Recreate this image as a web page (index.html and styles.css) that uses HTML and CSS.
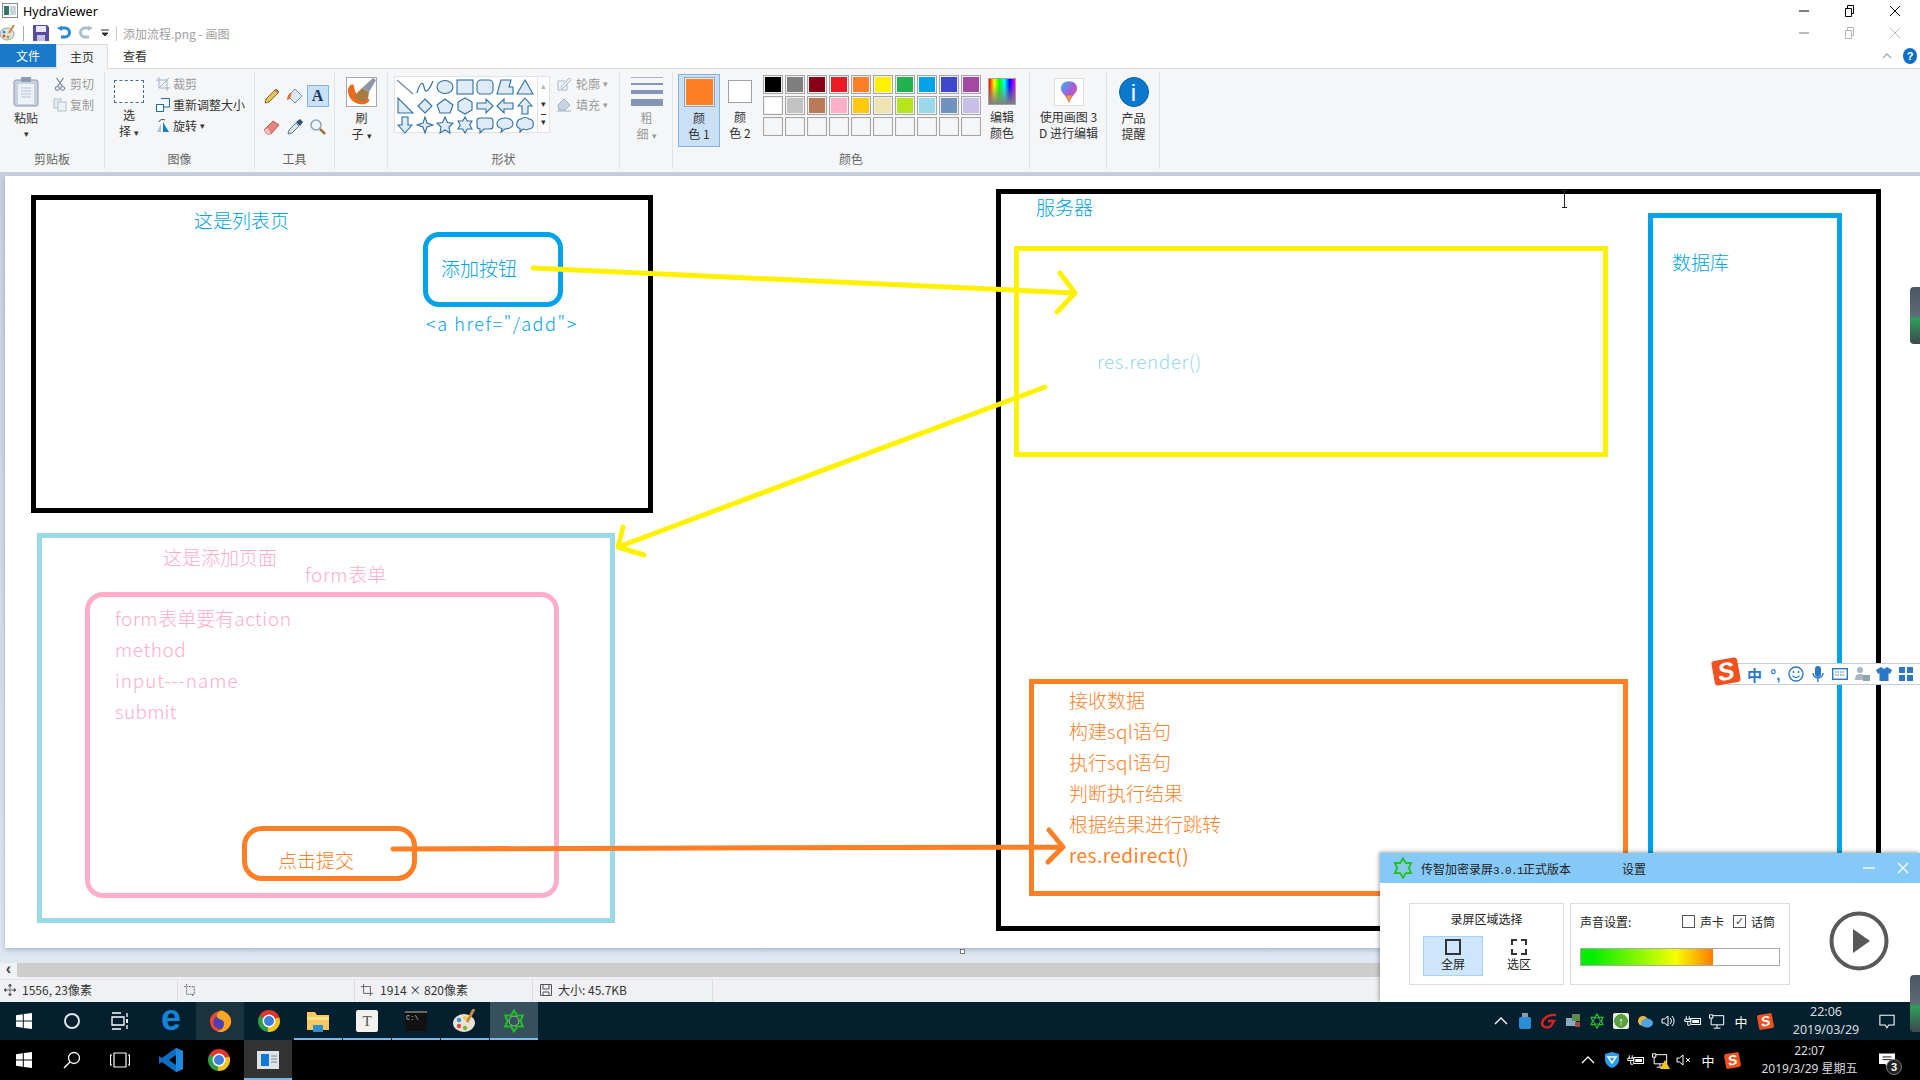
FILE: index.html
```html
<!DOCTYPE html>
<html lang="zh-CN">
<head>
<meta charset="utf-8">
<title>HydraViewer</title>
<link rel="stylesheet" href="styles.css">
</head>
<body>
<svg class="defs" aria-hidden="true">
  <defs>
    <symbol id="win" viewBox="0 0 16 16"><path d="M0 2.3 6.8 1.3V7.6H0ZM7.8 1.1 16 0V7.6H7.8ZM0 8.6H6.8V14.8L0 13.8ZM7.8 8.6H16V16L7.8 14.9Z" fill="#fff"/></symbol>
    <symbol id="star" viewBox="0 0 24 24"><path d="M12 1.5 15 6.500 20.800 6.500 18.500 12 20.800 17.500 15 17.500 12 22.500 9 17.500 3.200 17.500 5.500 12 3.200 6.500 9 6.500Z" fill="none" stroke="#1fc01f" stroke-width="2"/><circle cx="12" cy="12" r="5" fill="none" stroke="#7fd87f" stroke-width="1"/></symbol>
    <symbol id="batt" viewBox="0 0 24 16"><path d="M3 1V5M7 1V5M1 5H9V8H1ZM5 8V13H8" fill="none" stroke="#fff" stroke-width="1.300"/><rect x="9" y="4" width="13" height="8" fill="none" stroke="#fff" stroke-width="1.300"/><rect x="11" y="6" width="9" height="4" fill="#fff"/></symbol>
    <symbol id="net" viewBox="0 0 20 18"><path d="M1 1H5V5H1ZM5 2H18V13H3V5M10 13V17M6 17H14" fill="none" stroke="#fff" stroke-width="1.200"/></symbol>
  </defs>
</svg>

<header class="titlebar">
  <svg class="app-icon" viewBox="0 0 16 16"><rect x=".5" y=".5" width="15" height="14" fill="#fff" stroke="#8a8a8a"/><rect x="2" y="3" width="5" height="9" fill="#2d7a6a"/><rect x="8" y="3" width="6" height="9" fill="#c9d3dc"/></svg>
  <span class="app-name">HydraViewer</span>
  <div class="win-ctl">
    <svg viewBox="0 0 12 12"><path d="M1 6H11" stroke="#000"/></svg>
    <svg viewBox="0 0 12 12"><path d="M2.500 3.500H8.500V11.500H2.500ZM4.500 3.500V.5H10.500V8.500H8.500" fill="none" stroke="#000"/></svg>
    <svg viewBox="0 0 12 12"><path d="M1 1 11 11M11 1 1 11" stroke="#000"/></svg>
  </div>
</header>

<div class="quickbar">
  <svg class="qa-paint" viewBox="0 0 16 16"><ellipse cx="7" cy="9" rx="7" ry="6" fill="#e8e2d6" stroke="#8ba4b8"/><circle cx="4" cy="7" r="1.500" fill="#3a8fd8"/><circle cx="4" cy="11" r="1.500" fill="#e04a3a"/><circle cx="8" cy="12" r="1.500" fill="#7fb83a"/><path d="M14 0 9 8" stroke="#d08a2a" stroke-width="2"/></svg>
  <i class="q-sep"></i>
  <svg class="qa-save" viewBox="0 0 16 16"><path d="M0 0H14L16 2V16H0Z" fill="#5b4b9c"/><rect x="3" y="1" width="10" height="6" fill="#e9e6f5"/><rect x="4" y="10" width="8" height="6" fill="#c8c2e4"/></svg>
  <svg class="qa-undo" viewBox="0 0 14 14"><path d="M3 2H8A4.500 4.500 0 0 1 8 11H4" fill="none" stroke="#2a86d8" stroke-width="3"/><path d="M5 0V5L0 2Z" fill="#2a86d8"/></svg>
  <svg class="qa-redo" viewBox="0 0 14 14"><path d="M11 2H6A4.500 4.500 0 0 0 6 11H10" fill="none" stroke="#a9bfd2" stroke-width="3"/><path d="M9 0V5L14 2Z" fill="#a9bfd2"/></svg>
  <svg class="qa-more" viewBox="0 0 8 8"><path d="M0 1H8M1 4H7L4 7Z" stroke="#333" fill="#333"/></svg>
  <i class="q-sep q-sep2"></i>
  <span class="doc-title">添加流程.png - 画图</span>
  <div class="win-ctl win-ctl-dim">
    <svg viewBox="0 0 12 12"><path d="M1 6H11" stroke="#bbb" stroke-width="2"/></svg>
    <svg viewBox="0 0 12 12"><path d="M2.500 3.500H8.500V11.500H2.500ZM4.500 3.500V.5H10.500V8.500H8.500" fill="none" stroke="#b5b5b5"/></svg>
    <svg viewBox="0 0 12 12"><path d="M1 1 11 11M11 1 1 11" stroke="#bbb"/></svg>
  </div>
</div>

<nav class="tabs">
  <span class="tab tab-file">文件</span>
  <span class="tab tab-home">主页</span>
  <span class="tab tab-view">查看</span>
  <div class="tab-right">
    <svg class="collapse" viewBox="0 0 10 6"><path d="M1 5 5 1 9 5" fill="none" stroke="#aaa" stroke-width="1.300"/></svg>
    <span class="help">?</span>
  </div>
</nav>

<section class="ribbon">
  <div class="group g-clip">
    <div class="group-body">
      <div class="big big-paste">
        <svg class="ic-paste" viewBox="0 0 26 30"><rect x="1" y="3" width="24" height="26" rx="2" fill="#c7d0de" stroke="#8f9bb0"/><rect x="5" y="7" width="16" height="20" fill="#eef2f7"/><path d="M8 11H18M8 14H18M8 17H18M8 20H18" stroke="#b6c3d4"/><rect x="8" y="0" width="10" height="5" rx="1" fill="#8f9bb0"/></svg>
        <span>粘贴</span><span class="caret">▾</span>
      </div>
      <div class="small-col sc-clip">
        <div class="small"><svg viewBox="0 0 12 16"><path d="M2 1 9 11M10 1 3 11" stroke="#7a8aa0" stroke-width="1.300"/><circle cx="3" cy="13" r="2.200" fill="none" stroke="#7a8aa0" stroke-width="1.300"/><circle cx="9" cy="13" r="2.200" fill="none" stroke="#7a8aa0" stroke-width="1.300"/></svg><span class="dim">剪切</span></div>
        <div class="small"><svg viewBox="0 0 14 14"><rect x="1" y="1" width="7" height="9" fill="#e4eaf1" stroke="#b5c0ce"/><rect x="5" y="4" width="8" height="9" fill="#eef2f7" stroke="#b5c0ce"/></svg><span class="dim">复制</span></div>
      </div>
    </div>
    <div class="group-label">剪贴板</div>
  </div>

  <div class="group g-image">
    <div class="group-body">
      <div class="big big-select">
        <i class="ic-select"></i>
        <span>选</span><span>择<em class="caret-in">▾</em></span>
      </div>
      <div class="small-col sc-image">
        <div class="small"><svg viewBox="0 0 14 14"><path d="M3 0V11H14M0 3H11V14M3 11 13 1" fill="none" stroke="#9fb4c8"/></svg><span class="dim">裁剪</span></div>
        <div class="small"><svg viewBox="0 0 14 14"><rect x=".5" y="6.500" width="7" height="7" fill="#fff" stroke="#1a6fb5"/><path d="M5 .5H13.500V9H8" fill="none" stroke="#1a6fb5"/></svg><span>重新调整大小</span></div>
        <div class="small"><svg viewBox="0 0 14 14"><path d="M7 3 13 13H7Z" fill="#1f7ec9"/><path d="M1 13 5 5V13Z" fill="#9dc4e4"/><path d="M3 3A4 4 0 0 1 9 1" fill="none" stroke="#444"/></svg><span>旋转</span><em class="caret-in">▾</em></div>
      </div>
    </div>
    <div class="group-label">图像</div>
  </div>

  <div class="group g-tools">
    <div class="group-body">
      <div class="tool-grid">
        <svg viewBox="0 0 18 18"><path d="M2 16 3 12 13 2 16 5 6 15Z" fill="#e6c35c" stroke="#8a6a24"/><path d="M13 2 16 5 14.500 6.500 11.500 3.500Z" fill="#d96a5a"/></svg>
        <svg viewBox="0 0 18 18"><path d="M9 2 16 9 9 16 2 9Z" fill="#d8e8f4" stroke="#6c93b3"/><path d="M1 13C1 9 3 6 6 5L4 12Z" fill="#e2703a"/></svg>
        <span class="tool-a">A</span>
        <svg viewBox="0 0 18 18"><path d="M1 12 10 3 16 7 8 16H4Z" fill="#e8827f" stroke="#b85a58"/><path d="M1 12 4 16H8L5 10Z" fill="#f4c3c1"/></svg>
        <svg viewBox="0 0 18 18"><path d="M2 16 3 12 10 5 13 8 6 15Z" fill="#dbe6f0" stroke="#5d7a94"/><path d="M10 4 14 1 17 4 14 8Z" fill="#33506c"/></svg>
        <svg viewBox="0 0 18 18"><circle cx="7" cy="7" r="5" fill="#eef4fa" stroke="#8fa4b8" stroke-width="1.500"/><path d="M11 11 16 16" stroke="#a0753a" stroke-width="2.500"/></svg>
      </div>
    </div>
    <div class="group-label">工具</div>
  </div>

  <div class="group g-brush">
    <div class="group-body">
      <div class="big">
        <svg class="ic-brush" viewBox="0 0 31 30"><rect x=".5" y=".5" width="30" height="29" fill="#fff" stroke="#a3aab5"/><path d="M2 12C1 22 10 29 19 27 22 26 24 24 23 22 17 24 9 20 8 9 7 6 3 8 2 12Z" fill="#ee6a1c"/><path d="M9 18 16 11 23 15 22 22C18 26 10 25 9 18Z" fill="#a87a42"/><path d="M16 11 27 1 30 3 23 15Z" fill="#8c98a6"/></svg>
        <span>刷</span><span>子<em class="caret-in">▾</em></span>
      </div>
    </div>
    <div class="group-label">刷子</div>
  </div>

  <div class="group g-shapes">
    <div class="group-body">
      <div class="gallery">
        <div class="shape-grid">
          <svg viewBox="0 0 18 18"><path class="ln" d="M1 2 17 16"/></svg>
          <svg viewBox="0 0 18 18"><path class="sh-o" d="M1 15C4 4 7 3 8 9S12 15 17 3"/></svg>
          <svg viewBox="0 0 18 18"><ellipse class="sh" cx="9" cy="9" rx="8" ry="6.500"/></svg>
          <svg viewBox="0 0 18 18"><rect class="sh" x="1" y="2" width="16" height="14"/></svg>
          <svg viewBox="0 0 18 18"><rect class="sh" x="1" y="2" width="16" height="14" rx="4"/></svg>
          <svg viewBox="0 0 18 18"><path class="sh" d="M1 16 5 2H15L13 9H17V16Z"/></svg>
          <svg viewBox="0 0 18 18"><path class="sh" d="M9 2 17 16H1Z"/></svg>
          <svg viewBox="0 0 18 18"><path class="sh" d="M2 1V16H17Z"/></svg>
          <svg viewBox="0 0 18 18"><path class="sh" d="M9 2 16 9 9 16 2 9Z"/></svg>
          <svg viewBox="0 0 18 18"><path class="sh" d="M9 2 17 8 14 16H4L1 8Z"/></svg>
          <svg viewBox="0 0 18 18"><path class="sh" d="M9 1 16 5V13L9 17 2 13V5Z"/></svg>
          <svg viewBox="0 0 18 18"><path class="sh" d="M1 6H10V2L17 9 10 16V12H1Z"/></svg>
          <svg viewBox="0 0 18 18"><path class="sh" d="M17 6H8V2L1 9 8 16V12H17Z"/></svg>
          <svg viewBox="0 0 18 18"><path class="sh" d="M6 17V9H2L9 1 16 9H12V17Z"/></svg>
          <svg viewBox="0 0 18 18"><path class="sh" d="M6 1V9H2L9 17 16 9H12V1Z"/></svg>
          <svg viewBox="0 0 18 18"><path class="sh" d="M9 1 11 7 17 9 11 11 9 17 7 11 1 9 7 7Z"/></svg>
          <svg viewBox="0 0 18 18"><path class="sh" d="M9 1 11.500 6.500 17 7.200 13 11 14 17 9 14 4 17 5 11 1 7.200 6.500 6.500Z"/></svg>
          <svg viewBox="0 0 18 18"><path class="sh" d="M9 1 11.300 5 16 5 13.700 9 16 13 11.300 13 9 17 6.700 13 2 13 4.300 9 2 5 6.700 5Z"/></svg>
          <svg viewBox="0 0 18 18"><path class="sh" d="M4 2H14Q17 2 17 5V10Q17 13 14 13H8L4 17V13Q1 13 1 10V5Q1 2 4 2Z"/></svg>
          <svg viewBox="0 0 18 18"><path class="sh" d="M9 2C14 2 17 4.500 17 7.500S14 13 9 13L5 16 6 12.500C3 12 1 10 1 7.500 1 4.500 4 2 9 2Z"/></svg>
          <svg viewBox="0 0 18 18"><path class="sh" d="M5 3C7 1 11 1 13 3 16 3 18 6 17 8 18 11 15 13 13 13 11 14 9 14 7 13L4 16V12.500C1 12 0 9 1 7 1 5 3 3 5 3Z"/></svg>
        </div>
        <div class="scroller"><span class="up">▴</span><span>▾</span><span class="last">▾</span></div>
      </div>
      <div class="small-col sc-shapes">
        <div class="small"><svg viewBox="0 0 14 14"><path d="M1 4H8M1 4V13H10V6M4 10 12 1 14 3 5 12Z" fill="#eef2f7" stroke="#aab7c6"/></svg><span class="dim">轮廓</span><em class="caret-in dim">▾</em></div>
        <div class="small"><svg viewBox="0 0 14 14"><path d="M7 1 13 7 8 12H2L1 7Z" fill="#c8d5e3" stroke="#9fb0c2"/><path d="M0 13H14" stroke="#9fb0c2"/></svg><span class="dim">填充</span><em class="caret-in dim">▾</em></div>
      </div>
    </div>
    <div class="group-label">形状</div>
  </div>

  <div class="group g-size">
    <div class="group-body">
      <div class="big dim">
        <div class="ic-size"><i class="w1"></i><i class="w2"></i><i class="w3"></i><i class="w4"></i></div>
        <span>粗</span><span>细<em class="caret-in">▾</em></span>
      </div>
    </div>
  </div>

  <div class="group g-colors">
    <div class="group-body">
      <div class="big big-color1">
        <i class="swatch-main"></i>
        <span>颜</span><span>色 1</span>
      </div>
      <div class="big big-color2">
        <i class="swatch-second"></i>
        <span>颜</span><span>色 2</span>
      </div>
      <div class="palette">
        <i class="c-black"></i><i class="c-gray"></i><i class="c-maroon"></i><i class="c-red"></i><i class="c-orange"></i><i class="c-yellow"></i><i class="c-green"></i><i class="c-blue"></i><i class="c-indigo"></i><i class="c-purple"></i>
        <i class="c-white"></i><i class="c-silver"></i><i class="c-brown"></i><i class="c-pink"></i><i class="c-gold"></i><i class="c-cream"></i><i class="c-lime"></i><i class="c-sky"></i><i class="c-steel"></i><i class="c-lav"></i>
        <i></i><i></i><i></i><i></i><i></i><i></i><i></i><i></i><i></i><i></i>
      </div>
      <div class="big big-edit">
        <i class="ic-rainbow"></i>
        <span>编辑</span><span>颜色</span>
      </div>
    </div>
    <div class="group-label">颜色</div>
  </div>

  <div class="group g-3d">
    <div class="group-body">
      <div class="big">
        <div class="ic-3d"><svg viewBox="0 0 20 26"><defs><linearGradient id="drop" x1="0" y1="0" x2="1" y2="1"><stop offset="0" stop-color="#35b6ee"/><stop offset=".5" stop-color="#a45fd8"/><stop offset="1" stop-color="#f0527a"/></linearGradient></defs><path d="M10 1C16 1 19 5 19 9 19 14 14 15 10 25 6 15 1 14 1 9 1 5 4 1 10 1Z" fill="url(#drop)"/><path d="M10 25 7 17 13 17Z" fill="#f59a3a"/></svg></div>
        <span>使用画图 3</span><span>D 进行编辑</span>
      </div>
    </div>
  </div>

  <div class="group g-alert">
    <div class="group-body">
      <div class="big">
        <div class="ic-info">i</div>
        <span>产品</span><span>提醒</span>
      </div>
    </div>
  </div>
</section>

<main class="workspace">
  <div class="canvas">
    <div class="box b-list"></div>
    <div class="box b-add-btn"></div>
    <div class="box b-add"></div>
    <div class="box b-form"></div>
    <div class="box b-submit"></div>
    <div class="box b-server"></div>
    <div class="box b-yellow"></div>
    <div class="box b-db"></div>
    <div class="box b-orange"></div>

    <span class="t t-blue t-list">这是列表页</span>
    <span class="t t-blue t-addbtn">添加按钮</span>
    <span class="t t-blue t-href">&lt;a href="/add"&gt;</span>
    <span class="t t-pink t-addpage">这是添加页面</span>
    <span class="t t-pink t-form"><span class="lat-form">form</span>表单</span>
    <div class="t-lines t-pink l-form">
      <div><span class="lat-form">form</span>表单要有<span class="lat-form">action</span></div><div class="lat-form">method</div><div class="wide">input---name</div><div class="lat-s">submit</div>
    </div>
    <span class="t t-orange t-submit">点击提交</span>
    <span class="t t-blue t-server">服务器</span>
    <span class="t t-blue t-db">数据库</span>
    <span class="t t-sky t-render">res.render()</span>
    <div class="t-lines t-orange l-server">
      <div>接收数据</div><div>构建<span class="lat-s">sql</span>语句</div><div>执行<span class="lat-s">sql</span>语句</div><div>判断执行结果</div><div>根据结果进行跳转</div><div class="lat-r">res.redirect()</div>
    </div>

    <svg class="arrows" viewBox="0 0 1915 772">
      <g fill="none" stroke-linecap="round" stroke-linejoin="round" stroke-width="5">
        <path stroke="#fff200" d="M528 92 1070 117M1055 97 1070 117 1052 136"/>
        <path stroke="#fff200" d="M1040 211 613 371M618 351 613 371 639 379"/>
        <path stroke="#ff7f27" d="M388 673 700 672 1058 671M1044 654 1058 671 1043 686"/>
      </g>
    </svg>
    <i class="handle"></i>
    <svg class="ibeam" viewBox="0 0 7 18"><path d="M1 .5H6M3.500 .5V17.500M1 17.500H6" stroke="#222"/></svg>
  </div>
</main>

<div class="hscroll"><span class="hs-btn">‹</span><div class="hs-track"></div></div>

<footer class="statusbar">
  <div class="st st1"><svg viewBox="0 0 12 12"><path d="M6 0V12M0 6H12M6 0 4.500 2H7.500ZM6 12 4.500 10H7.500ZM0 6 2 4.500V7.500ZM12 6 10 4.500V7.500Z" stroke="#555" fill="#555" stroke-width=".8"/></svg><span>1556, 23像素</span></div>
  <div class="st st2"><svg viewBox="0 0 14 14"><path d="M3 0V3M0 3H3M3 3H12V12H3ZM10 12V14" fill="none" stroke="#555" stroke-dasharray="2 1"/></svg></div>
  <div class="st st3"><svg viewBox="0 0 14 14"><path d="M3 0V11H14M0 3H11V14" fill="none" stroke="#555"/></svg><span>1914 × 820像素</span></div>
  <div class="st st4"><svg viewBox="0 0 12 12"><path d="M.5 .5H11.500V11.500H.5ZM3 .5V5H9V.5M3 11.500V8H9V11.500" fill="none" stroke="#555"/></svg><span>大小: 45.7KB</span></div>
  <div class="st st5"></div>
</footer>

<div class="taskbar tb-top">
  <div class="tk tk-first"><svg class="i-win"><use href="#win"/></svg></div>
  <div class="tk"><i class="i-cortana"></i></div>
  <div class="tk"><svg class="i-view" viewBox="0 0 18 18"><path d="M1 1H10M1 17H10M1 5H13V13H1ZM16 1V5M16 13V17" fill="none" stroke="#fff" stroke-width="1.300"/><rect x="15" y="7" width="2" height="4" fill="#fff"/></svg></div>
  <div class="tk tk-app tk-gap"><span class="i-edge">e</span></div>
  <div class="tk tk-app tk-hover"><svg class="i-firefox" viewBox="0 0 24 24"><circle cx="12" cy="12.500" r="11" fill="#f0452e"/><circle cx="12" cy="13" r="7.500" fill="#4a3fb5"/><path d="M12 1C20 2 24 9 23 14 21 21 14 25 8 23 14 22 17 17 15 12 13 10 9 10 8 7 8 5 10 2 12 1Z" fill="#ffa51f"/></svg></div>
  <div class="tk tk-app"><i class="i-chrome"></i></div>
  <div class="tk tk-app tk-run"><svg class="i-folder" viewBox="0 0 24 22"><path d="M1 2H9L11 5H23V20H1Z" fill="#f6c95c"/><rect x="1" y="7" width="22" height="3" fill="#fbe08d"/><rect x="7" y="15" width="10" height="7" fill="#2e8fd4"/></svg></div>
  <div class="tk tk-app tk-run"><span class="i-typora">T</span></div>
  <div class="tk tk-app tk-run"><div class="i-term">C:\</div></div>
  <div class="tk tk-app tk-run"><svg class="i-paint" viewBox="0 0 24 24"><ellipse cx="11" cy="14" rx="11" ry="9" fill="#e8e2d6"/><circle cx="6" cy="11" r="2.200" fill="#3a8fd8"/><circle cx="6" cy="17" r="2.200" fill="#e04a3a"/><circle cx="12" cy="19" r="2.200" fill="#7fb83a"/><circle cx="12" cy="9" r="2" fill="#f0c93a"/><path d="M21 0 14 13" stroke="#c98a3a" stroke-width="3"/></svg></div>
  <div class="tk tk-app tk-active"><svg class="i-star"><use href="#star"/></svg></div>
  <div class="tray tray-top">
    <div class="ti"><svg class="chev" viewBox="0 0 14 8"><path d="M1 7 7 1 13 7" fill="none" stroke="#fff" stroke-width="1.300"/></svg></div>
    <div class="ti"><svg class="ico" viewBox="0 0 16 16"><rect x="5" y="0" width="6" height="5" fill="#8a9db0"/><rect x="2" y="4" width="12" height="12" rx="2" fill="#2a8fd8"/></svg></div>
    <div class="ti"><svg class="ico" viewBox="0 0 16 16"><path d="M15 2C8 1 2 5 1 10 1 14 6 16 10 13L13 8H7" fill="none" stroke="#e02020" stroke-width="2.400"/></svg></div>
    <div class="ti"><svg class="ico" viewBox="0 0 16 16"><rect x="1" y="5" width="10" height="8" fill="#8aa8c8"/><rect x="7" y="1" width="8" height="7" fill="#5c8a4a"/><rect x="10" y="9" width="5" height="5" fill="#a84a3a"/></svg></div>
    <div class="ti"><svg class="ico" viewBox="0 0 24 24"><use href="#star"/></svg></div>
    <div class="ti"><div class="i-up">↑</div></div>
    <div class="ti"><svg class="ico" viewBox="0 0 16 16"><circle cx="6" cy="8" r="5" fill="#f0b83a"/><ellipse cx="10" cy="10" rx="6" ry="4.500" fill="#4fa3e0"/></svg></div>
    <div class="ti"><svg class="ico" viewBox="0 0 16 16"><path d="M1 6H3.500L7 3V13L3.500 10H1Z" fill="none" stroke="#fff"/><path d="M9 5A4 4 0 0 1 9 11M11 3A7 7 0 0 1 11 13" fill="none" stroke="#fff"/></svg></div>
    <div class="ti"><svg class="ico-w"><use href="#batt"/></svg></div>
    <div class="ti"><svg class="ico-w"><use href="#net"/></svg></div>
    <div class="ti ti-text">中</div>
    <div class="ti"><span class="sogou sogou-sm">S</span></div>
    <div class="clock clock-top"><span>22:06</span><span>2019/03/29</span></div>
    <div class="notify"><svg viewBox="0 0 18 16"><path d="M1 1H17V12H11L9 15 7 12H1Z" fill="none" stroke="#fff" stroke-width="1.200"/></svg></div>
  </div>
</div>

<div class="taskbar tb-bottom">
  <div class="tk tk-first"><svg class="i-win"><use href="#win"/></svg></div>
  <div class="tk"><svg class="i-search" viewBox="0 0 18 18"><circle cx="11" cy="7" r="5.500" fill="none" stroke="#fff" stroke-width="1.300"/><path d="M7 11 1 17" stroke="#fff" stroke-width="1.500"/></svg></div>
  <div class="tk"><svg class="i-view2" viewBox="0 0 20 16"><path d="M4 1H16V15H4ZM2 3H.5V13H2M18 3H19.500V13H18" fill="none" stroke="#fff" stroke-width="1.200"/></svg></div>
  <div class="tk tk-gap"><svg class="i-code" viewBox="0 0 24 24"><path d="M17 0 24 3V21L17 24 3 14 0 16V8L3 10ZM17 7 10 12 17 17Z" fill="#0e6fc2"/><path d="M17 0 24 3V21L17 24Z" fill="#1c8ae0"/></svg></div>
  <div class="tk"><i class="i-chrome"></i></div>
  <div class="tk tk-open"><svg class="i-viewer" viewBox="0 0 22 18"><rect width="22" height="18" fill="#dfe3e8"/><rect x="4" y="3" width="8" height="12" fill="#0f78d4"/><path d="M14 5H20M14 8H20M14 11H20" stroke="#7b8794"/></svg></div>
  <div class="tray tray-bottom">
    <div class="ti"><svg class="chev" viewBox="0 0 14 8"><path d="M1 7 7 1 13 7" fill="none" stroke="#fff" stroke-width="1.300"/></svg></div>
    <div class="ti"><svg class="ico" viewBox="0 0 16 16"><path d="M8 0 15 2V8C15 12 11 15 8 16 5 15 1 12 1 8V2Z" fill="#2a9df0"/><path d="M4 5H12L8 11Z" fill="none" stroke="#fff" stroke-width="1.500"/></svg></div>
    <div class="ti"><svg class="ico-w"><use href="#batt"/></svg></div>
    <div class="ti ti-warn"><svg class="ico-w"><use href="#net"/></svg><svg class="warn" viewBox="0 0 10 9"><path d="M5 0 10 9H0Z" fill="#f5c518"/></svg></div>
    <div class="ti"><svg class="ico" viewBox="0 0 16 16"><path d="M1 6H3.500L7 3V13L3.500 10H1Z" fill="none" stroke="#fff"/><path d="M10 6 14 10M14 6 10 10" stroke="#fff"/></svg></div>
    <div class="ti ti-text">中</div>
    <div class="ti"><span class="sogou sogou-sm">S</span></div>
    <div class="clock clock-bottom"><span>22:07</span><span>2019/3/29 星期五</span></div>
    <div class="notify notify-msg"><svg viewBox="0 0 18 16"><path d="M0 0H18V12H11L9 15 7 12H0Z" fill="#fff"/><path d="M4 4H14M4 7H14" stroke="#000"/></svg><span class="badge">3</span></div>
  </div>
</div>

<aside class="recorder">
  <div class="rec-title">
    <svg class="rec-logo"><use href="#star"/></svg>
    <span class="rec-name">传智加密录屏<b>3.0.1</b>正式版本</span>
    <span class="rec-set">设置</span>
    <svg class="rec-min" viewBox="0 0 12 12"><path d="M0 6H12" stroke="#eaf5ff" stroke-width="1.600"/></svg>
    <svg class="rec-close" viewBox="0 0 12 12"><path d="M1 1 11 11M11 1 1 11" stroke="#fff" stroke-width="1.300"/></svg>
  </div>
  <div class="rec-body">
    <div class="rec-panel rec-area">
      <div class="rec-head">录屏区域选择</div>
      <div class="rec-modes">
        <div class="mode mode-on"><i class="m-full"></i><span>全屏</span></div>
        <div class="mode"><i class="m-area"></i><span>选区</span></div>
      </div>
    </div>
    <div class="rec-panel rec-sound">
      <div class="snd-row">
        <span class="snd-label">声音设置:</span>
        <label class="chk chk-card"><i class="box-chk"></i>声卡</label>
        <label class="chk"><i class="box-chk on">✓</i>话筒</label>
      </div>
      <div class="meter"><i class="meter-fill"></i></div>
    </div>
    <div class="play"><svg viewBox="0 0 60 60"><circle cx="30" cy="30" r="27.500" fill="none" stroke="#595959" stroke-width="4"/><path d="M24 18 41 30 24 42Z" fill="#595959"/></svg></div>
  </div>
</aside>

<aside class="ime">
  <span class="sogou sogou-lg">S</span>
  <div class="ime-bar">
    <b class="ime-zh">中</b>
    <b class="ime-punct">°,</b>
    <svg viewBox="0 0 16 16"><circle cx="8" cy="8" r="7" fill="none" stroke="#2b78c8" stroke-width="1.400"/><circle cx="5.500" cy="6" r="1" fill="#2b78c8"/><circle cx="10.500" cy="6" r="1" fill="#2b78c8"/><path d="M4.500 9.500A4 4 0 0 0 11.500 9.500" fill="none" stroke="#2b78c8" stroke-width="1.300"/></svg>
    <svg viewBox="0 0 16 16"><rect x="5" y="0" width="6" height="11" rx="3" fill="#2b78c8"/><path d="M3 7A5 5 0 0 0 13 7M8 12V16" fill="none" stroke="#2b78c8" stroke-width="1.400"/></svg>
    <svg viewBox="0 0 16 16"><rect x=".7" y="2.700" width="14.600" height="10.600" fill="none" stroke="#2b78c8" stroke-width="1.400"/><path d="M3 6H13M3 9H13" stroke="#2b78c8" stroke-dasharray="1.500 1"/></svg>
    <svg viewBox="0 0 16 16"><circle cx="6" cy="4" r="3" fill="#a9b6c6"/><path d="M1 14C1 9 3 8 6 8S11 9 11 14Z" fill="#a9b6c6"/><rect x="9" y="9" width="7" height="6" fill="#8fa1b5"/></svg>
    <svg viewBox="0 0 16 16"><path d="M5 1 8 3 11 1 16 4 14 8 12.500 7V15H3.500V7L2 8 0 4Z" fill="#2b78c8"/></svg>
    <svg viewBox="0 0 16 16"><path d="M1 1H7V7H1ZM9 1H15V7H9ZM1 9H7V15H1ZM9 9H15V15H9Z" fill="#2b78c8"/></svg>
  </div>
</aside>

<i class="edge-widget ew-top"></i>
<i class="edge-widget ew-bottom"></i>
</body>
</html>
```

FILE: styles.css
```css
* { box-sizing: border-box; }
html, body { margin: 0; padding: 0; }
body {
  position: relative;
  width: 1920px;
  height: 1080px;
  overflow: hidden;
  display: flex;
  flex-direction: column;
  background: #fff;
  color: #333;
  font: 12px "Noto Sans CJK SC", "Noto Sans", sans-serif;
}
.defs { position: absolute; width: 0; height: 0; }
i, em { font-style: normal; display: block; }
em.caret-in { display: inline; font-size: 9px; margin-left: 3px; }

/* title rows */
.titlebar { height: 22px; flex: none; display: flex; align-items: center; padding-left: 2px; color: #000; }
.app-icon { width: 16px; height: 16px; }
.app-name { margin-left: 5px; font: 12.500px "Noto Sans", sans-serif; }
.win-ctl { margin-left: auto; display: flex; width: 122px; }
.win-ctl svg { width: 12px; height: 12px; margin-right: 33px; }
.win-ctl svg:last-child { margin-right: 0; margin-left: 1px; }
.quickbar { height: 22px; flex: none; display: flex; align-items: center; }
.qa-paint { width: 16px; height: 16px; }
.q-sep { width: 1px; height: 15px; background: #aaa; margin-left: 7px; }
.qa-save { width: 16px; height: 16px; margin-left: 9px; }
.qa-undo { width: 14px; height: 14px; margin-left: 8px; }
.qa-redo { width: 14px; height: 14px; margin-left: 8px; }
.qa-more { width: 8px; height: 8px; margin-left: 8px; }
.q-sep2 { margin-left: 7px; background: #c8c8c8; }
.doc-title { margin-left: 6px; color: #a0a0a0; }
.win-ctl-dim { margin-left: auto; }

/* tabs */
.tabs { height: 25px; flex: none; display: flex; align-items: stretch; position: relative; border-bottom: 1px solid #dadbdc; }
.tab { display: flex; align-items: center; justify-content: center; }
.tab-file { width: 56px; background: #1979ca; color: #fff; border-bottom: 1px solid #dadbdc; height: 24px; }
.tab-home { width: 52px; background: #f5f6f7; border: 1px solid #dadbdc; border-bottom: 0; height: 25px; position: relative; z-index: 1; padding-bottom: 2px; }
.tab-view { width: 54px; padding-bottom: 2px; }
.tab-right { margin-left: auto; display: flex; align-items: center; padding-right: 3px; padding-bottom: 1px; }
.collapse { width: 10px; height: 6px; margin-right: 11px; }
.help { width: 14px; height: 16px; border-radius: 50%; background: #0f6fc6; color: #fff; font: bold 11px/16px "Liberation Sans", sans-serif; text-align: center; }

/* ribbon */
.ribbon { height: 103px; flex: none; display: flex; background: #f5f6f7; }
.group { flex: none; display: flex; flex-direction: column; border-right: 1px solid #e2e3e4; margin: 3px 0 3px; }
.g-clip { width: 105px; }
.g-image { width: 150px; }
.g-tools { width: 80px; }
.g-brush { width: 53px; }
.g-shapes { width: 232px; }
.g-size { width: 53px; }
.g-colors { width: 357px; }
.g-3d { width: 77px; }
.g-alert { width: 53px; }
.group-body { height: 77px; padding-top: 1px; display: flex; align-items: flex-start; }
.group-label { text-align: center; line-height: 20px; color: #666; }
.g-brush .group-label { visibility: hidden; }
.big { flex: none; display: flex; flex-direction: column; align-items: center; padding-top: 4px; line-height: 16px; color: #333; }
.big > :first-child { margin-bottom: 3px; }
.big > span { white-space: nowrap; }
.g-clip .big { width: 52px; }
.g-image .big { width: 48px; }
.g-brush .big { width: 53px; }
.g-size .big { width: 53px; }
.g-3d .big { width: 77px; }
.g-alert .big { width: 53px; }
.dim { color: #9a9a9a !important; }
.ic-paste { width: 26px; height: 30px; }
.caret { font-size: 9px; }
.small-col { display: flex; flex-direction: column; }
.small { height: 21px; display: flex; align-items: center; white-space: nowrap; }
.small svg { width: 14px; height: 14px; margin-right: 3px; flex: none; }
.sc-clip { margin-left: 1px; }
.sc-image { margin-left: 3px; }
.sc-shapes { margin-left: 7px; }
.sc-shapes .small svg { margin-right: 5px; }
.ic-select { width: 30px; height: 23px; border: 1px dashed #4a6a8a; margin-top: 3px; background: #fff; }
.big-select > :first-child { margin-bottom: 4px; }

.tool-grid { display: grid; grid-template-columns: repeat(3, 23px); grid-auto-rows: 28px; row-gap: 3px; margin: 9px 0 0 5px; place-items: center; }
.tool-grid svg { width: 18px; height: 18px; }
.tool-a { width: 22px; height: 22px; background: #c9e0f7; border: 1px solid #7eb4ea; color: #17375e; font: bold 16px/20px "Liberation Serif", serif; text-align: center; }
.ic-brush { width: 31px; height: 30px; }

.gallery { display: flex; width: 156px; height: 57px; margin: 3px 0 0 6px; background: #fff; border: 1px solid #dfe2e6; }
.shape-grid { display: grid; grid-template-columns: repeat(7, 20px); grid-auto-rows: 19px; width: 142px; place-items: center; }
.shape-grid svg { width: 18px; height: 18px; }
.sh { fill: #dfecf7; stroke: #2f6f9f; stroke-width: 1.100; }
.sh-o { fill: none; stroke: #2f6f9f; stroke-width: 1.200; }
.ln { stroke: #6f8aa3; stroke-width: 1.200; }
.scroller { width: 12px; border-left: 1px solid #dfe2e6; display: flex; flex-direction: column; align-items: center; font-size: 9px; line-height: 18px; color: #333; }
.scroller .up { color: #b5b5b5; }
.scroller .last { text-decoration: overline; }

.ic-size { width: 32px; height: 30px; display: flex; flex-direction: column; margin-top: 0; }
.ic-size i { background: #8596b5; }
.w1 { height: 1px; margin-bottom: 5px; background: #aab6cb !important; }
.w2 { height: 2px; margin-bottom: 5px; }
.w3 { height: 4px; margin-bottom: 5px; }
.w4 { height: 7px; }

.big-color1 { width: 42px; height: 73px; margin: 1px 0 0 5px; background: #c9e0f7; border: 1px solid #7eb4ea; padding-top: 2px; }
.swatch-main { width: 31px; height: 30px; background: #ff7f27; border: 1px solid #9aa3ad; outline: 1px solid #e8eef5; outline-offset: -2px; }
.big-color2 { width: 40px; padding-top: 7px; }
.big-color2 > :first-child { margin-bottom: 6px; }
.swatch-second { width: 24px; height: 23px; background: #fff; border: 1px solid #a0a0a0; }
.palette { display: grid; grid-template-columns: repeat(10, 20px); grid-auto-rows: 19px; gap: 2px; margin: 2px 0 0 3px; }
.palette i { border: 1px solid #a6a6a6; box-shadow: inset 0 0 0 1px #f0f0f0; }
.c-black { background: #000; } .c-gray { background: #7f7f7f; } .c-maroon { background: #880015; } .c-red { background: #ed1c24; }
.c-orange { background: #ff7f27; } .c-yellow { background: #fff200; } .c-green { background: #22b14c; } .c-blue { background: #00a2e8; }
.c-indigo { background: #3f48cc; } .c-purple { background: #a349a4; }
.c-white { background: #fff; } .c-silver { background: #c3c3c3; } .c-brown { background: #b97a57; } .c-pink { background: #ffaec9; }
.c-gold { background: #ffc90e; } .c-cream { background: #efe4b0; } .c-lime { background: #b5e61d; } .c-sky { background: #99d9ea; }
.c-steel { background: #7092be; } .c-lav { background: #c8bfe7; }
.big-edit { width: 42px; padding-top: 5px; }
.big-edit > :first-child { margin-bottom: 4px; }
.ic-rainbow { width: 28px; height: 27px; border: 1px solid #a0a0a0; background: linear-gradient(to bottom, transparent 20%, #808080), linear-gradient(to right, #f00, #ff0, #0f0, #0ff, #00f, #f0f); }
.ic-3d { width: 30px; height: 28px; background: #fff; border: 1px solid #dcdcdc; display: flex; align-items: center; justify-content: center; margin: 1px 0 3px; }
.ic-3d svg { width: 18px; height: 24px; }
.ic-info { width: 30px; height: 30px; border-radius: 50%; background: #0a78cc; color: #fff; font: 24px/30px "Liberation Sans", sans-serif; text-align: center; border: 1px solid #0b5fa5; }

/* canvas */
.workspace { height: 791px; flex: none; padding: 4px 0 0 5px; background: linear-gradient(#c9d0e4, #dfe7f3); }
.canvas { position: relative; width: 1915px; height: 772px; background: #fff; box-shadow: 0 2px 5px rgba(120, 140, 170, .55); }
.box { position: absolute; border: 5px solid #000; }
.b-list { left: 26px; top: 19px; width: 622px; height: 318px; }
.b-add-btn { left: 418px; top: 56px; width: 140px; height: 75px; border-color: #00a2e8; border-radius: 16px; }
.b-add { left: 32px; top: 357px; width: 578px; height: 390px; border-color: #99d9ea; }
.b-form { left: 80px; top: 416px; width: 474px; height: 306px; border-color: #ffaec9; border-radius: 18px; }
.b-submit { left: 237px; top: 650px; width: 175px; height: 55px; border-color: #ff7f27; border-radius: 20px; }
.b-server { left: 991px; top: 13px; width: 885px; height: 742px; }
.b-yellow { left: 1009px; top: 70px; width: 594px; height: 211px; border-color: #fff200; }
.b-db { left: 1643px; top: 37px; width: 194px; height: 700px; border-color: #00a2e8; }
.b-orange { left: 1024px; top: 503px; width: 599px; height: 217px; border-color: #ff7f27; }

.t, .t-lines { position: absolute; font-size: 19px; font-weight: 300; line-height: 26px; white-space: nowrap; }
.t-lines { line-height: 31px; }
.t-blue { color: #00a2e8; }
.t-pink { color: #ffaec9; }
.t-orange { color: #ff7f27; }
.t-sky { color: #99d9ea; }
.t-list { left: 189px; top: 31px; }
.t-addbtn { left: 436px; top: 79px; }
.t-href { left: 421px; top: 134px; font-size: 18px; letter-spacing: 1.600px; }
.t-addpage { left: 158px; top: 368px; }
.t-form { left: 300px; top: 385px; }
.l-form { left: 110px; top: 426px; }
.lat-form { letter-spacing: .6px; }
.lat-s { letter-spacing: .3px; }
.lat-r { letter-spacing: .45px; font-weight: 400; }
.wide { letter-spacing: .85px; }
.t-submit { left: 273px; top: 671px; }
.t-server { left: 1031px; top: 18px; }
.t-db { left: 1667px; top: 73px; }
.t-render { left: 1092px; top: 172px; letter-spacing: .5px; }
.l-server { left: 1064px; top: 508px; }
.arrows { position: absolute; left: 0; top: 0; width: 1915px; height: 772px; }
.handle { position: absolute; left: 955px; top: 773px; width: 5px; height: 5px; background: #fff; border: 1px solid #777; }
.ibeam { position: absolute; left: 1556px; top: 14px; width: 7px; height: 18px; }

/* scrollbar, status */
.hscroll { height: 16px; flex: none; display: flex; background: #f0f2f5; padding-bottom: 2px; }
.hs-btn { width: 17px; text-align: center; font: bold 16px/12px "Liberation Sans", sans-serif; color: #444; }
.hs-track { flex: 1; background: #cdcdcd; }
.statusbar { height: 23px; flex: none; display: flex; background: #f0f1f4; border-top: 1px solid #e3e4e6; }
.st { display: flex; align-items: center; border-right: 1px solid #dcdcdc; white-space: nowrap; padding-bottom: 3px; }
.st svg { width: 12px; height: 12px; margin-left: 4px; margin-right: 6px; flex: none; }
.st1 { width: 178px; }
.st2 { width: 177px; padding-left: 2px; }
.st3 { width: 178px; padding-left: 2px; }
.st3 svg { margin-right: 7px; }
.st4 { width: 180px; padding-left: 3px; }
.st5 { flex: 1; border-right: 0; }

/* taskbars */
.taskbar { flex: none; display: flex; align-items: stretch; position: relative; color: #fff; }
.tb-top { height: 38px; background: #04202f; }
.tb-bottom { height: 40px; background: #000; }
.tk { width: 48px; display: flex; align-items: center; justify-content: center; flex: none; }
.tk-app { margin-left: 1px; }
.tk-gap { margin-left: 3px; }
.tk-hover { background: #19333f; }
.tk-run { box-shadow: inset 0 -2px 0 #76b9ed; }
.tk-active { background: #36505e; box-shadow: inset 0 -2px 0 #76b9ed; }
.tk-open { background: #333; box-shadow: inset 0 -2px 0 #76b9ed; margin-left: 1px; }
.i-win { width: 16px; height: 16px; }
.i-cortana { width: 16px; height: 16px; border: 2px solid #dfe6ea; border-radius: 50%; }
.i-view { width: 18px; height: 18px; }
.i-edge { color: #1384d8; font: bold 36px/32px "Liberation Sans", sans-serif; margin-top: -6px; }
.i-firefox { width: 23px; height: 24px; }
.i-chrome { position: relative; width: 22px; height: 22px; border-radius: 50%; background: conic-gradient(#e0362c 0 70deg, #f6c21a 70deg 185deg, #2f9e44 185deg 300deg, #e0362c 300deg); }
.i-chrome::after { content: ""; position: absolute; left: 6px; top: 6px; width: 10px; height: 10px; border-radius: 50%; background: #3d7fe0; box-shadow: 0 0 0 1.500px #fff; }
.i-folder { width: 24px; height: 22px; }
.i-typora { width: 22px; height: 22px; background: #f4f2ee; color: #555; font: 15px/22px "Liberation Serif", serif; text-align: center; border-radius: 2px; }
.i-term { width: 22px; height: 20px; background: #111; border-top: 2px solid #666; color: #ccc; font: 7px/10px "Liberation Mono", monospace; padding-left: 1px; }
.i-paint { width: 24px; height: 24px; }
.i-star { width: 24px; height: 24px; }
.i-search { width: 18px; height: 18px; }
.i-view2 { width: 20px; height: 16px; }
.i-code { width: 24px; height: 24px; }
.i-viewer { width: 22px; height: 18px; }

.tray { margin-left: auto; display: flex; align-items: center; }
.ti { width: 24px; height: 100%; display: flex; align-items: center; justify-content: center; position: relative; font-size: 13px; }
.ti-text { font-size: 13px; color: #fff; }
.chev { width: 14px; height: 8px; }
.ico { width: 16px; height: 16px; }
.ico-w { width: 18px; height: 15px; }
.warn { position: absolute; right: 2px; bottom: 11px; width: 10px; height: 9px; }
.i-up { width: 16px; height: 16px; border-radius: 2px; background: radial-gradient(circle, #5aa03c 60%, #e9efe4 62%); color: #fff; font: bold 11px/16px "Liberation Sans", sans-serif; text-align: center; }
.sogou { display: block; background: #f0511e; color: #fff; font-family: "Liberation Sans", sans-serif; font-weight: bold; font-style: italic; text-align: center; transform: rotate(-10deg); }
.sogou-sm { width: 15px; height: 15px; font-size: 14px; line-height: 15px; border-radius: 2px; }
.clock { display: flex; flex-direction: column; align-items: center; color: #d8dcdf; font-family: "Noto Sans", "Noto Sans CJK SC", sans-serif; font-size: 12.500px; }
.clock-top { width: 92px; margin-left: 3px; line-height: 18px; }
.clock-bottom { width: 125px; margin-left: 3px; line-height: 18px; font-size: 12px; }
.notify { width: 30px; margin-right: 18px; display: flex; justify-content: center; align-items: center; position: relative; }
.notify svg { width: 16px; height: 15px; }
.badge { position: absolute; left: 14px; top: 6px; width: 16px; height: 16px; border-radius: 50%; background: #222; border: 1px solid #777; font: bold 11px/14px "Liberation Sans", sans-serif; text-align: center; color: #fff; }

/* recorder window */
.recorder { position: absolute; left: 1380px; top: 853px; width: 540px; height: 149px; background: #fff; box-shadow: -1px -1px 4px rgba(0, 0, 0, .35); color: #222; }
.rec-title { height: 30px; background: #85c9f8; display: flex; align-items: center; padding-left: 12px; }
.rec-logo { width: 22px; height: 22px; }
.rec-name { margin-left: 7px; font-family: "Noto Sans CJK SC", sans-serif; }
.rec-name b { font: 11px "Liberation Mono", monospace; letter-spacing: -.6px; }
.rec-set { margin-left: 51px; }
.rec-min { width: 12px; height: 12px; margin-left: 217px; }
.rec-close { width: 12px; height: 12px; margin-left: 22px; }
.rec-body { display: flex; padding: 20px 0 0 29px; align-items: flex-start; }
.rec-panel { border: 1px solid #dcdcdc; height: 82px; flex: none; }
.rec-area { width: 155px; }
.rec-head { text-align: center; line-height: 16px; margin-top: 7px; }
.rec-modes { display: flex; margin: 9px 0 0 13px; }
.mode { width: 60px; height: 40px; display: flex; flex-direction: column; align-items: center; padding-top: 3px; line-height: 14px; margin-right: 6px; }
.mode-on { background: #cde6fb; border: 1px solid #a9d3f2; padding-top: 2px; }
.m-full { width: 16px; height: 16px; border: 2px solid #333; margin-bottom: 2px; }
.m-area { width: 16px; height: 16px; border: 2px dashed #333; margin-bottom: 2px; }
.rec-sound { width: 220px; margin-left: 6px; padding: 0 9px; }
.snd-row { display: flex; align-items: center; height: 32px; margin-top: 1px; }
.snd-label { flex: none; width: 102px; }
.chk { display: flex; align-items: center; flex: none; white-space: nowrap; }
.chk-card { width: 51px; }
.box-chk { width: 13px; height: 13px; border: 1px solid #555; margin-right: 5px; font: 11px/11px "DejaVu Sans", sans-serif; text-align: center; color: #444; }
.meter { width: 200px; height: 18px; margin-top: 11px; border: 1px solid #aaa; background: #fff; }
.meter-fill { width: 132px; height: 100%; background: linear-gradient(to right, #00ee00 8%, #f6ff00 72%, #ff7a00 100%); }
.play { width: 60px; height: 60px; margin: 8px 0 0 39px; flex: none; }
.play svg { width: 60px; height: 60px; display: block; }

/* IME bar */
.ime { position: absolute; left: 1713px; top: 659px; width: 207px; height: 27px; }
.sogou-lg { position: absolute; left: 0; top: 0; width: 26px; height: 25px; font-size: 25px; line-height: 25px; border-radius: 3px; z-index: 1; }
.ime-bar { position: absolute; left: 14px; top: 4px; width: 193px; height: 22px; background: #fff; border: 1px solid #c5cede; border-right: 0; display: flex; align-items: center; padding-left: 19px; }
.ime-bar svg { width: 16px; height: 16px; margin-right: 6px; flex: none; }
.ime-zh { color: #2b78c8; font-size: 15px; width: 22px; }
.ime-punct { color: #2b78c8; font: bold 15px "Liberation Sans", sans-serif; width: 21px; margin-right: 3px; padding-left: 4px; }

.edge-widget { position: absolute; left: 1910px; width: 10px; height: 57px; background: linear-gradient(#4a5660, #5c6b76 50%, #2f9e5a 55%, #3c4850); border-radius: 4px 0 0 4px; }
.ew-top { top: 287px; }
.ew-bottom { top: 975px; }
```
